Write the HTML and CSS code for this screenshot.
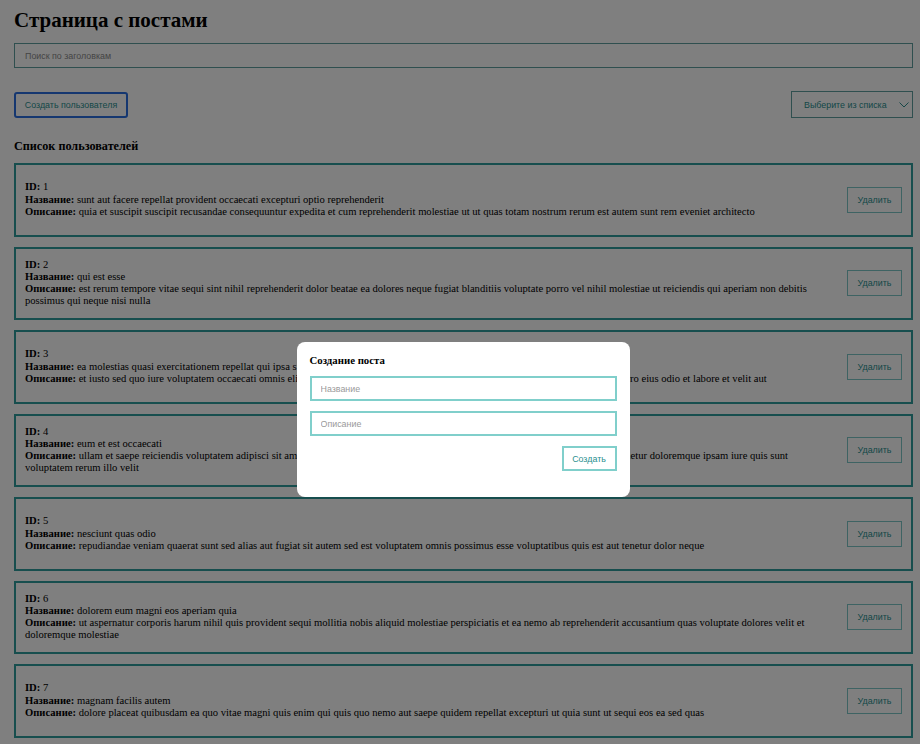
FILE: index.html
```html
<!DOCTYPE html>
<html lang="ru">
<head>
<meta charset="utf-8">
<title>Страница с постами</title>
<link rel="stylesheet" href="styles.css">
</head>
<body>
<div class="page">
  <h1 class="title">Страница с постами</h1>
  <input class="search" type="text" placeholder="Поиск по заголовкам">
  <div class="toolbar">
    <button class="btn btn-create">Создать пользователя</button>
    <div class="select">
      <span>Выберите из списка</span>
      <svg class="chev" width="10" height="6" viewBox="0 0 10 6"><path d="M0.5 0.5 L5 5 L9.5 0.5" fill="none" stroke="#2f8f8f" stroke-width="1"/></svg>
    </div>
  </div>
  <h3 class="subtitle">Список пользователей</h3>
  <div class="list">
    <div class="card">
      <div class="card-text">
        <div><b>ID:</b> 1</div>
        <div><b>Название:</b> sunt aut facere repellat provident occaecati excepturi optio reprehenderit</div>
        <div><b>Описание:</b> quia et suscipit suscipit recusandae consequuntur expedita et cum reprehenderit molestiae ut ut quas totam nostrum rerum est autem sunt rem eveniet architecto</div>
      </div>
      <button class="btn btn-del">Удалить</button>
    </div>
    <div class="card">
      <div class="card-text">
        <div><b>ID:</b> 2</div>
        <div><b>Название:</b> qui est esse</div>
        <div><b>Описание:</b> est rerum tempore vitae sequi sint nihil reprehenderit dolor beatae ea dolores neque fugiat blanditiis voluptate porro vel nihil molestiae ut reiciendis qui aperiam non debitis possimus qui neque nisi nulla</div>
      </div>
      <button class="btn btn-del">Удалить</button>
    </div>
    <div class="card">
      <div class="card-text">
        <div><b>ID:</b> 3</div>
        <div><b>Название:</b> ea molestias quasi exercitationem repellat qui ipsa sit aut</div>
        <div><b>Описание:</b> et iusto sed quo iure voluptatem occaecati omnis eligendi aut ad voluptatem doloribus vel accusantium quis pariatur molestiae porro eius odio et labore et velit aut</div>
      </div>
      <button class="btn btn-del">Удалить</button>
    </div>
    <div class="card">
      <div class="card-text">
        <div><b>ID:</b> 4</div>
        <div><b>Название:</b> eum et est occaecati</div>
        <div><b>Описание:</b> ullam et saepe reiciendis voluptatem adipisci sit amet autem assumenda provident rerum culpa quis hic commodi nesciunt rem tenetur doloremque ipsam iure quis sunt voluptatem rerum illo velit</div>
      </div>
      <button class="btn btn-del">Удалить</button>
    </div>
    <div class="card">
      <div class="card-text">
        <div><b>ID:</b> 5</div>
        <div><b>Название:</b> nesciunt quas odio</div>
        <div><b>Описание:</b> repudiandae veniam quaerat sunt sed alias aut fugiat sit autem sed est voluptatem omnis possimus esse voluptatibus quis est aut tenetur dolor neque</div>
      </div>
      <button class="btn btn-del">Удалить</button>
    </div>
    <div class="card">
      <div class="card-text">
        <div><b>ID:</b> 6</div>
        <div><b>Название:</b> dolorem eum magni eos aperiam quia</div>
        <div><b>Описание:</b> ut aspernatur corporis harum nihil quis provident sequi mollitia nobis aliquid molestiae perspiciatis et ea nemo ab reprehenderit accusantium quas voluptate dolores velit et doloremque molestiae</div>
      </div>
      <button class="btn btn-del">Удалить</button>
    </div>
    <div class="card">
      <div class="card-text">
        <div><b>ID:</b> 7</div>
        <div><b>Название:</b> magnam facilis autem</div>
        <div><b>Описание:</b> dolore placeat quibusdam ea quo vitae magni quis enim qui quis quo nemo aut saepe quidem repellat excepturi ut quia sunt ut sequi eos ea sed quas</div>
      </div>
      <button class="btn btn-del">Удалить</button>
    </div>
  </div>
</div>

<div class="overlay">
  <div class="modal">
    <h4 class="modal-title">Создание поста</h4>
    <input class="field" type="text" placeholder="Название">
    <input class="field" type="text" placeholder="Описание">
    <div class="modal-actions">
      <button class="btn btn-submit">Создать</button>
    </div>
  </div>
</div>
</body>
</html>
```

FILE: styles.css
```css
html, body {
  margin: 0;
  padding: 0;
  overflow: hidden;
  background: #fff;
}

body {
  font-family: "Liberation Serif", "Times New Roman", serif;
  color: #000;
}

.page {
  padding: 7px 7px 0 14px;
  display: flex;
  flex-direction: column;
}

.title {
  margin: 0 0 10px;
  font-size: 21px;
  line-height: 26px;
  font-weight: bold;
}

.search {
  box-sizing: border-box;
  height: 25px;
  width: 100%;
  margin: 0;
  padding: 0 10px;
  border: 1px solid #5f9e9e;
  border-radius: 0;
  font-family: "Liberation Sans", Arial, sans-serif;
  font-size: 8.9px;
  outline: none;
}
.search::placeholder { color: #8a8a8a; }

.toolbar {
  display: flex;
  justify-content: space-between;
  align-items: center;
  margin-top: 23px;
}

.btn {
  box-sizing: border-box;
  font-family: "Liberation Sans", Arial, sans-serif;
  font-size: 8.9px;
  color: #2a8f8f;
  background: #fff;
  border: 1px solid #7cc7c7;
  border-radius: 0;
  padding: 0;
  cursor: pointer;
}

.btn-create {
  height: 26px;
  width: 114px;
  padding: 0;
  border: 2px solid #2a6ee0;
  border-radius: 3px;
}

.select {
  box-sizing: border-box;
  height: 27px;
  width: 122px;
  border: 1px solid #5f9e9e;
  display: flex;
  align-items: center;
  justify-content: space-between;
  padding: 0 3px 0 12px;
  font-family: "Liberation Sans", Arial, sans-serif;
  font-size: 8.9px;
  color: #2a8f8f;
}
.chev { display: block; }

.subtitle {
  margin: 20px 0 0;
  font-size: 12.2px;
  line-height: 16px;
  font-weight: bold;
}

.list {
  display: flex;
  flex-direction: column;
  gap: 10px;
  margin-top: 9px;
}

.card {
  box-sizing: border-box;
  height: 73.5px;
  border: 2px solid #2f9c9c;
  display: flex;
  align-items: center;
  padding: 0 9px 0 9px;
}

.card-text {
  flex: 1;
  font-size: 10.6px;
  line-height: 12.2px;
  padding-right: 30px;
}

.btn-del {
  width: 55px;
  height: 26px;
  flex: none;
}

.overlay {
  position: fixed;
  inset: 0;
  background: rgba(0, 0, 0, 0.5);
  display: flex;
  justify-content: center;
  align-items: flex-start;
  padding: 342px 0 0 6px;
}

.modal {
  box-sizing: border-box;
  width: 333px;
  height: 155px;
  background: #fff;
  border-radius: 8px;
  padding: 10px 13px 0;
  display: flex;
  flex-direction: column;
}

.modal-title {
  margin: 0 0 8px;
  font-size: 10.8px;
  line-height: 16px;
  font-weight: bold;
}

.field {
  box-sizing: border-box;
  width: 100%;
  height: 25px;
  margin: 0 0 10px;
  padding: 0 9px;
  border: 2px solid #80cfcb;
  font-family: "Liberation Sans", Arial, sans-serif;
  font-size: 8.9px;
  outline: none;
}
.field::placeholder { color: #9a9a9a; }

.modal-actions {
  display: flex;
  justify-content: flex-end;
}

.btn-submit {
  width: 55px;
  height: 25px;
  border: 2px solid #80cfcb;
}
```
